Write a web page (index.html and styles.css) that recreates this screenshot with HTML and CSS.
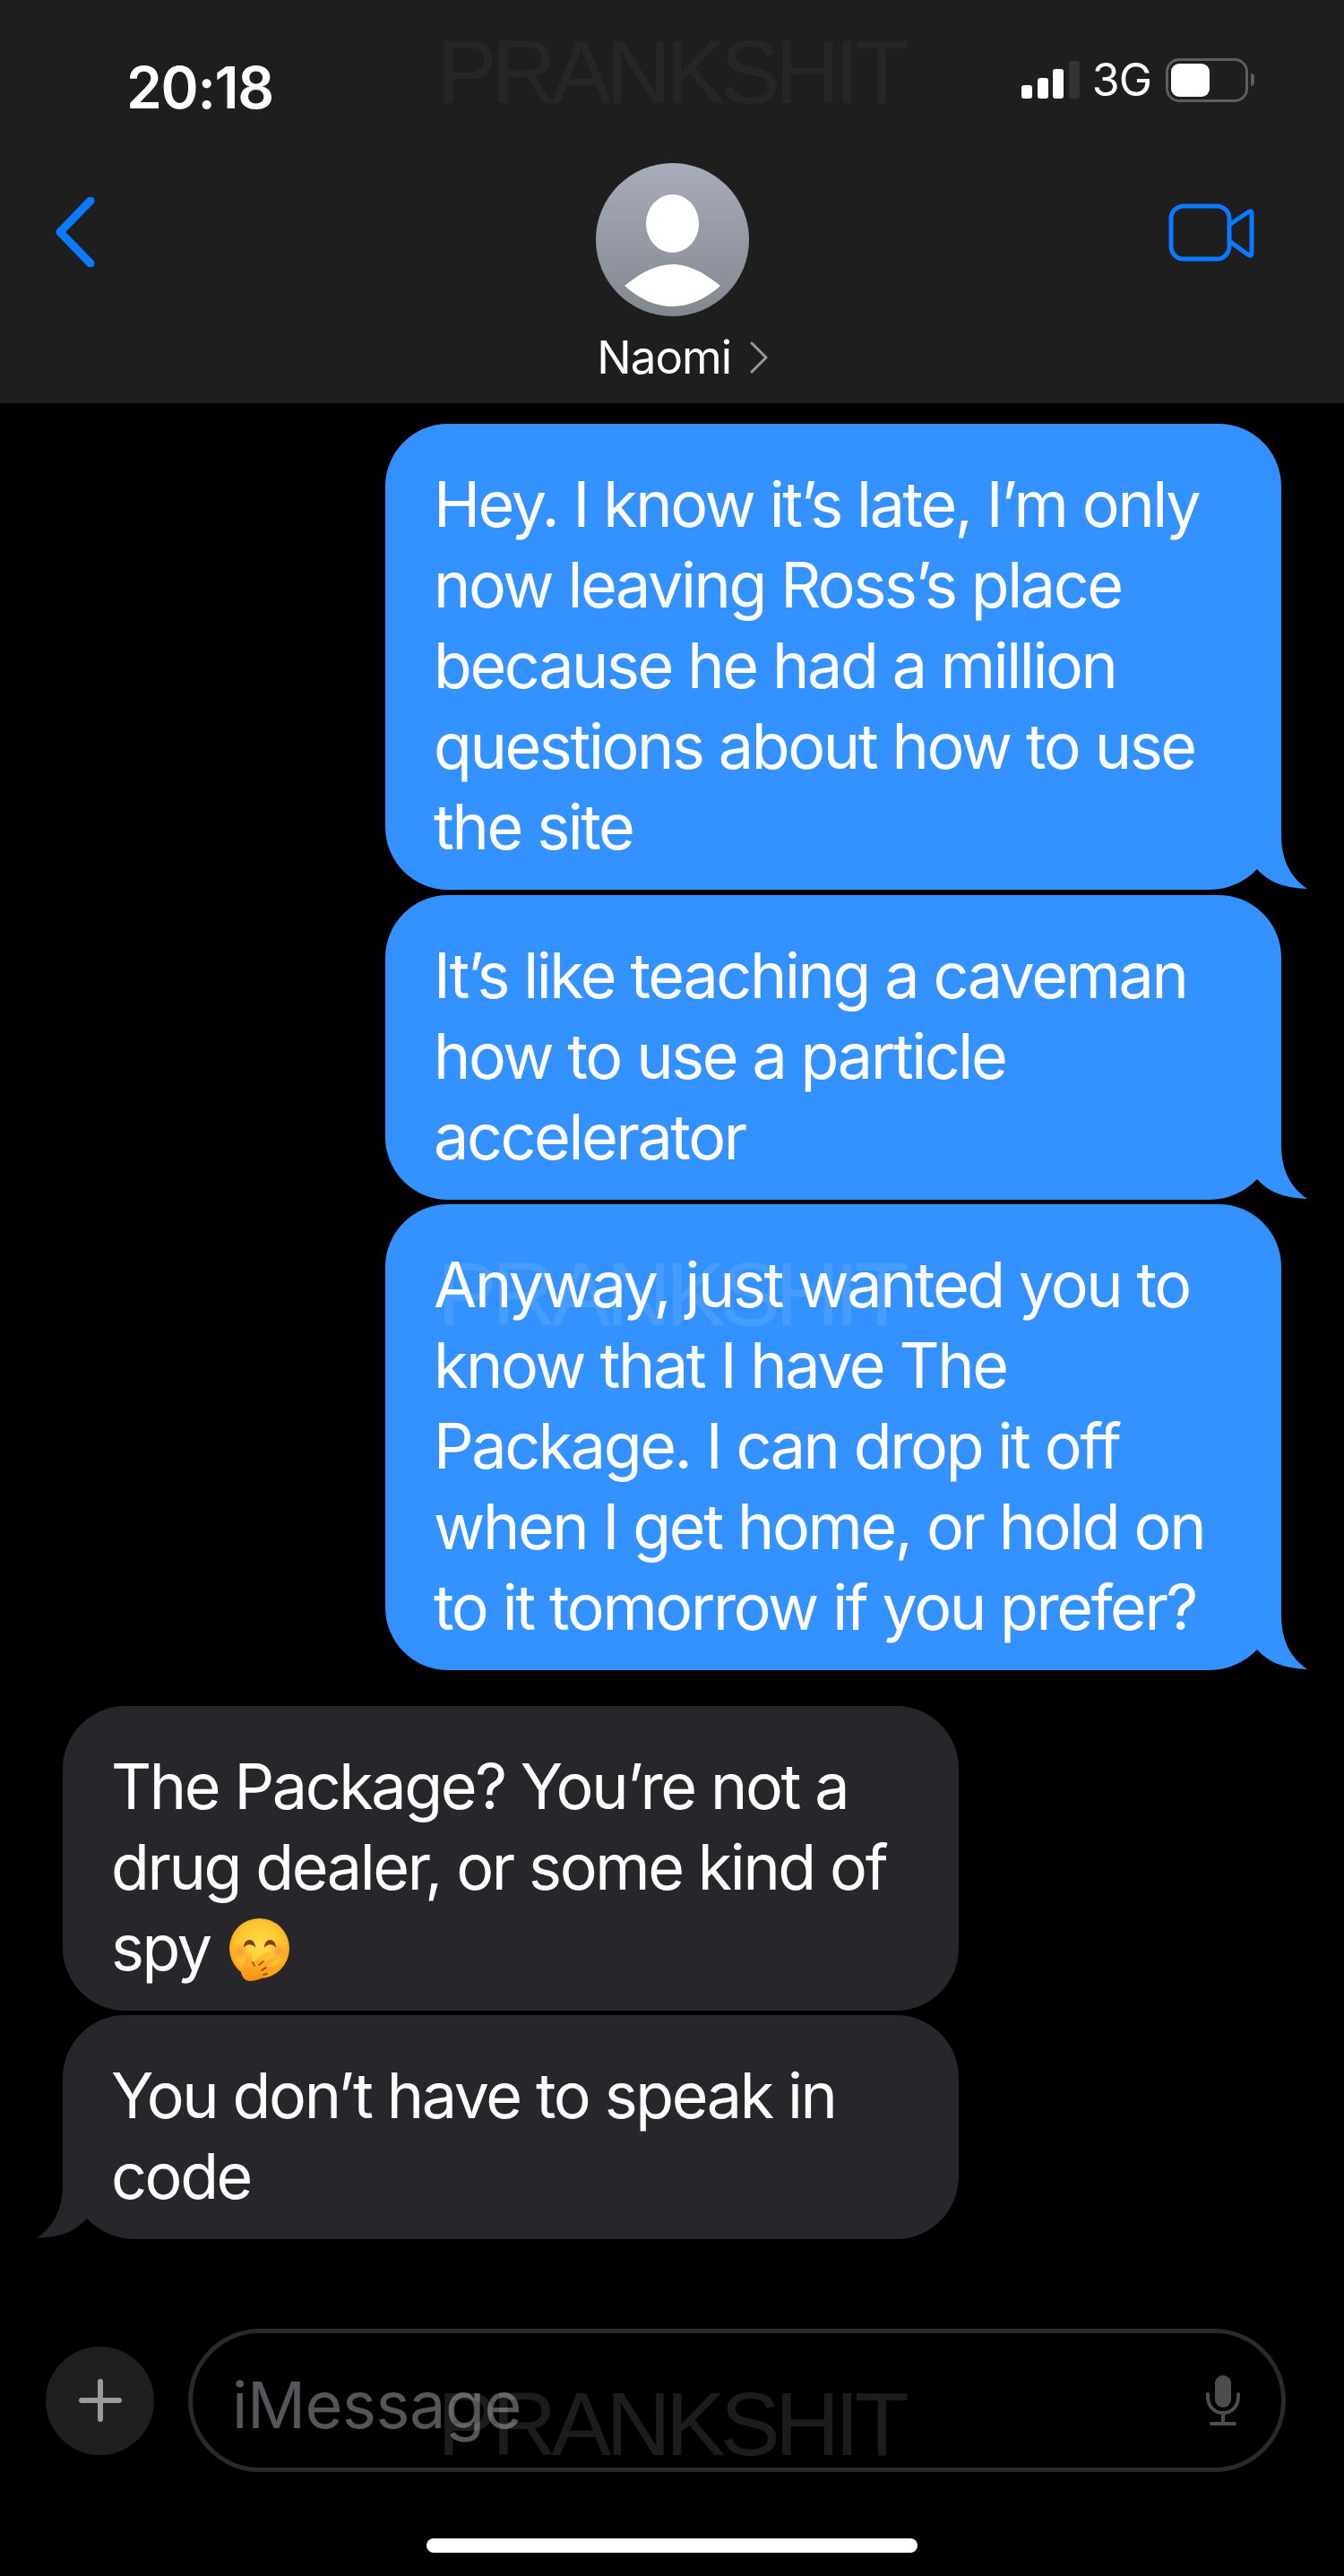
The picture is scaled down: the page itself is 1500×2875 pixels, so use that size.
FILE: index.html
```html
<!DOCTYPE html>
<html lang="en">
<head>
  <meta charset="UTF-8" />
  <title>Messages - Naomi</title>
  <link rel="stylesheet" href="styles.css">
</head>
<body>
  <div class="phone">
    <header class="top">
      <div class="status">
        <span class="time">20:18</span>
        <div class="status-right">
          <div class="signal">
            <i class="bar b1"></i><i class="bar b2"></i><i class="bar b3"></i><i class="bar b4"></i>
          </div>
          <span class="net">3G</span>
          <div class="battery"><div class="battery-fill"></div></div>
          <div class="battery-nub"></div>
        </div>
      </div>
      <nav class="nav">
        <svg class="back" width="44" height="78" viewBox="0 0 44 78">
          <path d="M39 4 L5 39 L39 74" fill="none" stroke="#0a7aff" stroke-width="9" stroke-linecap="round" stroke-linejoin="round"/>
        </svg>
        <div class="contact">
          <svg class="avatar" width="171" height="171" viewBox="0 0 171 171">
            <defs>
              <linearGradient id="avatarBg" x1="0" y1="0" x2="0" y2="1">
                <stop offset="0" stop-color="#a7acba"/>
                <stop offset="1" stop-color="#83878f"/>
              </linearGradient>
            </defs>
            <circle cx="85.5" cy="85.5" r="85.5" fill="url(#avatarBg)"/>
            <ellipse cx="85.5" cy="67.5" rx="29.5" ry="32.5" fill="#fff"/>
            <path d="M32 137 C50 122 68 113 85.5 113 C103 113 121 122 139 137 C122 152 104 160 85.5 160 C67 160 49 152 32 137Z" fill="#fff"/>
          </svg>
          <div class="name-row">
            <span class="name">Naomi</span>
            <svg width="20" height="36" viewBox="0 0 20 36">
              <path d="M2 2 L18 18 L2 34" fill="none" stroke="#9a9a9a" stroke-width="3" stroke-linecap="round" stroke-linejoin="round"/>
            </svg>
          </div>
        </div>
        <svg class="video" width="96" height="66" viewBox="0 0 96 66">
          <rect x="3" y="3" width="65" height="59" rx="14" fill="none" stroke="#0a7aff" stroke-width="5"/>
          <path d="M68 24 L90 9 Q93 8 93 11 L93 55 Q93 59 90 58 L68 42" fill="none" stroke="#0a7aff" stroke-width="5" stroke-linejoin="round"/>
        </svg>
      </nav>
    </header>

    <main class="messages">
      <div class="bubble sent">
        Hey. I know it’s late, I’m only<br>now leaving Ross’s place<br>because he had a million<br>questions about how to use<br>the site
        <svg class="tail" width="120" height="74" viewBox="0 0 120 74"><path d="M10 74 C30 74 50 65 63 51 L119 74 Z" fill="#000"/><path d="M50 0 H90 V13 C90 40 100 60 119 73 C98 72 78 68 63 51 Z" fill="#3392ff"/></svg>
      </div>
      <div class="bubble sent">
        It’s like teaching a caveman<br>how to use a particle<br>accelerator
        <svg class="tail" width="120" height="74" viewBox="0 0 120 74"><path d="M10 74 C30 74 50 65 63 51 L119 74 Z" fill="#000"/><path d="M50 0 H90 V13 C90 40 100 60 119 73 C98 72 78 68 63 51 Z" fill="#3392ff"/></svg>
      </div>
      <div class="bubble sent">
        Anyway, just wanted you to<br>know that I have The<br>Package. I can drop it off<br>when I get home, or hold on<br>to it tomorrow if you prefer?
        <svg class="tail" width="120" height="74" viewBox="0 0 120 74"><path d="M10 74 C30 74 50 65 63 51 L119 74 Z" fill="#000"/><path d="M50 0 H90 V13 C90 40 100 60 119 73 C98 72 78 68 63 51 Z" fill="#3392ff"/></svg>
      </div>
      <div class="bubble received first-received">
        The Package? You’re not a<br>drug dealer, or some kind of<br>spy
        <svg class="emoji" width="67" height="70" viewBox="0 0 67 70">
          <defs>
            <radialGradient id="face" cx="0.5" cy="0.45" r="0.55">
              <stop offset="0" stop-color="#ffdc4e"/>
              <stop offset="0.7" stop-color="#ffc52e"/>
              <stop offset="1" stop-color="#f89c17"/>
            </radialGradient>
            <linearGradient id="hand" x1="0" y1="0" x2="0" y2="1">
              <stop offset="0" stop-color="#ffbe36"/>
              <stop offset="1" stop-color="#f98e12"/>
            </linearGradient>
            <radialGradient id="cheek">
              <stop offset="0" stop-color="#f9813a" stop-opacity="0.7"/>
              <stop offset="1" stop-color="#f9813a" stop-opacity="0"/>
            </radialGradient>
          </defs>
          <circle cx="33.5" cy="33.5" r="33.5" fill="url(#face)"/>
          <circle cx="12" cy="37" r="10" fill="url(#cheek)"/>
          <circle cx="55" cy="37" r="10" fill="url(#cheek)"/>
          <path d="M16 33 C16 21 29 21 29 33 C26 28 19 28 16 33Z" fill="#7a4304"/>
          <path d="M39 33 C39 21 52 21 52 33 C49 28 42 28 39 33Z" fill="#7a4304"/>
          <path d="M13 60 C15 52 17 46 19 41 C20 37 25 37 25 41 L26 49 L41 38 C45 35 48 39 45 42 L38 48 L48 43 C52 41 54 46 51 48 L41 55 L50 52 C53 51 54 55 51 57 L42 62 C38 67 30 70 23 70 C18 70 14 66 13 60Z" fill="url(#hand)"/>
          <path d="M26 49 L28 53 M38 48 L33 52 M41 55 L36 58 M42 62 L38 63" stroke="#8a4a06" stroke-width="1.6" fill="none" stroke-linecap="round"/>
        </svg>
      </div>
      <div class="bubble received">
        You don’t have to speak in<br>code
        <svg class="tail tail-left" width="120" height="74" viewBox="0 0 120 74"><path d="M10 74 C30 74 50 65 63 51 L119 74 Z" fill="#000"/><path d="M50 0 H90 V13 C90 40 100 60 119 73 C98 72 78 68 63 51 Z" fill="#26262b"/></svg>
      </div>
    </main>

    <footer class="composer">
      <div class="plus">
        <svg width="48" height="48" viewBox="0 0 48 48">
          <path d="M24 3 V45 M3 24 H45" stroke="#9b9b9d" stroke-width="6" stroke-linecap="round"/>
        </svg>
      </div>
      <div class="field">
        <span class="placeholder">iMessage</span>
        <svg class="mic" width="38" height="58" viewBox="0 0 38 58">
          <rect x="10" y="1" width="18" height="36" rx="9" fill="#4d4d4d"/>
          <path d="M2 22 V25 C2 35 9 43 19 43 C29 43 36 35 36 25 V22 M19 43 V54 M6 55 H32" fill="none" stroke="#4d4d4d" stroke-width="4" stroke-linecap="round"/>
        </svg>
      </div>
    </footer>

    <div class="home-bar"></div>

    <div class="mark mark-top">PRANKSHIT</div>
    <div class="mark mark-mid">PRANKSHIT</div>
    <div class="mark mark-bottom">PRANKSHIT</div>
  </div>
</body>
</html>
```

FILE: styles.css
```css
* {
  box-sizing: border-box;
}
body {
  margin: 0;
  background: #000;
  font-family: "Inter", "Liberation Sans", sans-serif;
  color: #fff;
}
.phone {
  position: relative;
  width: 1500px;
  height: 2875px;
  overflow: hidden;
  background: #000;
}

/* header */
.top {
  height: 450px;
  background: #1e1e1e;
  padding-top: 62px;
}
.status {
  display: flex;
  justify-content: space-between;
  align-items: center;
  height: 70px;
  padding: 0 100px 0 141px;
}
.time {
  font-size: 64px;
  font-weight: 600;
  letter-spacing: -1.3px;
}
.status-right {
  display: flex;
  align-items: center;
  padding-bottom: 16px;
}
.signal {
  display: flex;
  align-items: flex-end;
  gap: 5.5px;
  height: 42px;
  margin-right: 14px;
}
.bar {
  display: block;
  width: 12px;
  background: #fff;
  border-radius: 3px;
}
.b1 { height: 15px; }
.b2 { height: 23px; }
.b3 { height: 33px; }
.b4 { height: 42px; background: #333; }
.net {
  font-size: 50px;
  letter-spacing: -1px;
  margin-right: 16px;
}
.battery {
  width: 92px;
  height: 49px;
  border: 3px solid #5e5e5e;
  border-radius: 15px;
  padding: 3px;
}
.battery-fill {
  width: 43px;
  height: 100%;
  background: #fff;
  border-radius: 9px;
}
.battery-nub {
  width: 4px;
  height: 14px;
  margin-left: 3px;
  background: #5e5e5e;
  border-radius: 0 4px 4px 0;
}
.nav {
  display: grid;
  grid-template-columns: 581px 214px 1fr;
  padding: 50px 100px 0 62px;
}
.back {
  margin-top: 38px;
}
.video {
  justify-self: end;
  margin-top: 45px;
}
.contact {
  width: 214px;
  display: flex;
  flex-direction: column;
  align-items: center;
}
.name-row {
  align-self: flex-end;
  display: flex;
  align-items: center;
  gap: 21px;
  margin-top: 16px;
}
.name {
  font-size: 51px;
  line-height: 60px;
  letter-spacing: -1px;
}

/* bubbles */
.messages {
  display: flex;
  flex-direction: column;
  gap: 5.5px;
  padding: 23px 70px 0;
}
.bubble {
  position: relative;
  width: 1000px;
  padding: 45px 56px 25px 54px;
  border-radius: 70px;
  font-size: 70px;
  line-height: 90px;
  letter-spacing: -2.4px;
  white-space: nowrap;
}
.sent {
  align-self: flex-end;
  background: #3392ff;
}
.received {
  align-self: flex-start;
  background: #26262b;
}
.first-received {
  margin-top: 34px;
}
.tail {
  position: absolute;
  right: -30px;
  bottom: 0;
}
.tail-left {
  right: auto;
  left: -30px;
  transform: scaleX(-1);
}
.emoji {
  vertical-align: -12px;
  margin-left: 4px;
}

/* input */
.composer {
  display: flex;
  align-items: center;
  gap: 38px;
  padding: 100px 65px 0 51px;
}
.plus {
  flex: none;
  width: 121px;
  height: 121px;
  border-radius: 50%;
  background: #1f1f1f;
  display: flex;
  align-items: center;
  justify-content: center;
}
.field {
  flex: 1;
  height: 160px;
  border: 5px solid #2a2a2a;
  border-radius: 80px;
  display: flex;
  align-items: center;
  justify-content: space-between;
  padding: 0 46px 0 44px;
}
.placeholder {
  font-size: 72px;
  letter-spacing: -0.5px;
  color: #55555a;
  padding-top: 8px;
}
.home-bar {
  width: 548px;
  height: 16px;
  margin: 74px auto 0;
  background: #fff;
  border-radius: 8px;
}

/* watermark */
.mark {
  position: absolute;
  left: 488px;
  font-family: "Liberation Sans", sans-serif;
  font-size: 100px;
  line-height: 100px;
  letter-spacing: -5.7px;
  white-space: nowrap;
}
.mark-top {
  top: 30px;
  color: rgba(255, 255, 255, 0.04);
}
.mark-mid {
  top: 1394px;
  color: rgba(255, 255, 255, 0.1);
}
.mark-bottom {
  top: 2655px;
  color: rgba(255, 255, 255, 0.11);
}
```
